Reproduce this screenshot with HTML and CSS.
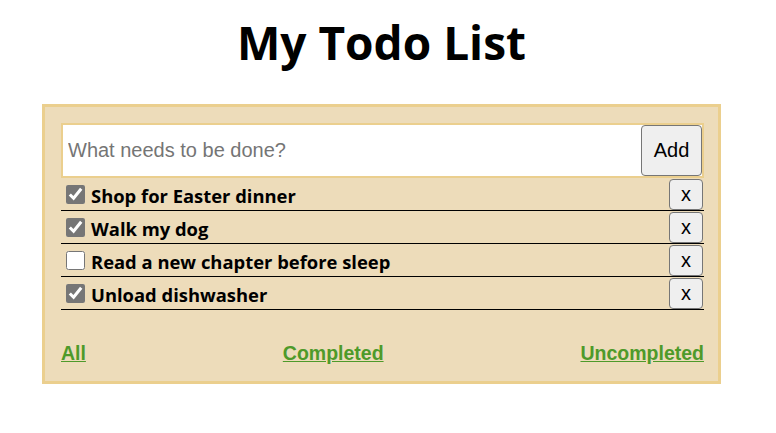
FILE: index.html
```html
<!DOCTYPE html>
<html>
<head>
<meta charset="utf-8">
<link rel="stylesheet" href="styles.css">
</head>
<body>
<div class="page">
  <h1 class="title">My Todo List</h1>
  <div class="box">
    <form class="add-form">
      <input class="add-input" type="text" placeholder="What needs to be done?">
      <button class="add-btn" type="button">Add</button>
    </form>
    <ul class="list">
      <li class="item"><label class="item-label"><input class="check" type="checkbox" checked><span>Shop for Easter dinner</span></label><button class="del" type="button">x</button></li>
      <li class="item"><label class="item-label"><input class="check" type="checkbox" checked><span>Walk my dog</span></label><button class="del" type="button">x</button></li>
      <li class="item"><label class="item-label"><input class="check" type="checkbox"><span>Read a new chapter before sleep</span></label><button class="del" type="button">x</button></li>
      <li class="item"><label class="item-label"><input class="check" type="checkbox" checked><span>Unload dishwasher</span></label><button class="del" type="button">x</button></li>
    </ul>
    <nav class="filters">
      <a class="filter" href="#">All</a>
      <a class="filter" href="#">Completed</a>
      <a class="filter" href="#">Uncompleted</a>
    </nav>
  </div>
</div>
</body>
</html>
```
FILE: styles.css
```css
body {
  margin: 8px;
  background: #fff;
  font-family: "Liberation Sans", Arial, sans-serif;
}
.page {
  width: 747px;
}
.title {
  margin: 2px 0 0;
  text-align: center;
  font-family: "Open Sans", "Noto Sans", sans-serif;
  font-weight: 700;
  font-size: 46px;
  line-height: 64px;
  color: #000;
}
.box {
  width: 643px;
  margin: 30px auto 0;
  padding: 16px 14px 16px 16px;
  background: #eddcba;
  border: 3px solid #ebcf8e;
}
.add-form {
  display: flex;
  align-items: center;
  margin: 0;
  height: 51px;
  border: 2px solid #ebcf8e;
  background: #fff;
}
.add-input {
  flex: 1;
  min-width: 0;
  border: none;
  outline: none;
  padding: 0 0 0 5px;
  height: 100%;
  font-family: "Liberation Sans", Arial, sans-serif;
  font-size: 20px;
  background: #fff;
}
.add-input::placeholder {
  color: #757575;
}
.add-btn {
  width: 61px;
  height: 51px;
  margin: 0;
  font-family: "Liberation Sans", Arial, sans-serif;
  font-size: 20px;
  background: #efefef;
  border: 1px solid #767676;
  border-radius: 4px;
  color: #000;
}
.list {
  list-style: none;
  margin: 0;
  padding: 0;
}
.item {
  display: flex;
  align-items: center;
  justify-content: space-between;
  height: 32px;
  border-bottom: 1px solid #000;
}
.item-label {
  display: flex;
  align-items: center;
  font-family: "Open Sans", "Noto Sans", sans-serif;
  font-weight: 700;
  font-size: 18.4px;
  color: #000;
}
.item-label span {
  position: relative;
  top: 1px;
}
.check {
  width: 19px;
  height: 19px;
  margin: 0 6px 0 5px;
  accent-color: #767676;
}
.del {
  width: 34px;
  height: 31px;
  margin: 0 1px 0 0;
  padding: 0;
  font-family: "Liberation Sans", Arial, sans-serif;
  font-size: 20px;
  background: #efefef;
  border: 1px solid #767676;
  border-radius: 4px;
  color: #000;
}
.filters {
  display: flex;
  justify-content: space-between;
  margin-top: 32px;
}
.filter {
  font-family: "Liberation Sans", Arial, sans-serif;
  font-weight: 700;
  font-size: 19.5px;
  color: #4e9a2a;
}
```
